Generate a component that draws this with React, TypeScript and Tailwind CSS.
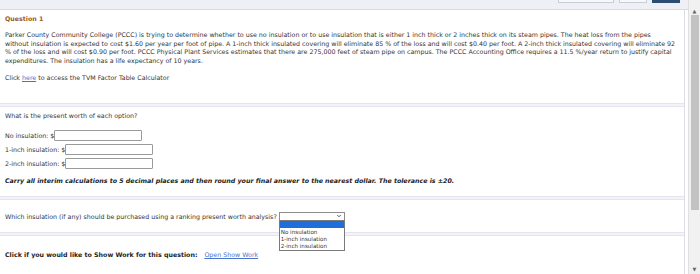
import { ChevronDown } from "lucide-react";

const font = { fontFamily: '"DejaVu Sans", Verdana, sans-serif' };

function Separator() {
  return <div className="h-[4px] border-y border-[#e4e4ee] bg-[#f3f3f8]" />;
}

function AmountRow(props: { label: string }) {
  return (
    <div className="flex items-center h-[14px]">
      <span>{props.label}</span>
      <input className="w-[88px] h-[11px] border border-[#9a9a9a] bg-white rounded-[1px]" />
    </div>
  );
}

export default function App() {
  return (
    <div
      className="w-[700px] h-[274px] overflow-hidden flex bg-white text-[#333] text-[6.3px] leading-[9px]"
      style={font}
    >
      <div className="flex-1 flex flex-col">
        <div className="h-[10px] bg-[#eef0f5] border-b border-[#d6dae2] flex justify-end items-start gap-[5px] pr-[8px]">
          <div className="w-[56px] h-[3px] border-x border-b border-[#c9ced8] bg-[#f7f8fa]" />
          <div className="w-[28px] h-[3px] border-x border-b border-[#c9ced8] bg-[#f7f8fa]" />
          <div className="w-[28px] h-[3px] bg-[#2e4d72]" />
        </div>
        <div className="flex-1 border-r border-[#dcdce6] mr-[3px] flex flex-col">
          <div className="px-[5px] pt-[4px] h-[93px]">
            <div className="font-bold text-[#a05a22]">Question 1</div>
            <div className="mt-[8px] whitespace-nowrap leading-[8.7px]">
              <div>
                Parker County Community College (PCCC) is trying to determine whether to use no insulation or to use insulation that is either 1 inch thick or 2 inches thick on its steam pipes. The heat loss from the pipes
              </div>
              <div>
                without insulation is expected to cost $1.60 per year per foot of pipe. A 1-inch thick insulated covering will eliminate 85 % of the loss and will cost $0.40 per foot. A 2-inch thick insulated covering will eliminate 92
              </div>
              <div>
                % of the loss and will cost $0.90 per foot. PCCC Physical Plant Services estimates that there are 275,000 feet of steam pipe on campus. The PCCC Accounting Office requires a 11.5 %/year return to justify capital
              </div>
              <div>expenditures. The insulation has a life expectancy of 10 years.</div>
            </div>
            <div className="mt-[7px]">
              Click <span className="text-[#4a74c9] underline">here</span> to access the TVM Factor Table Calculator
            </div>
          </div>
          <Separator />
          <div className="px-[5px] pt-[4px] h-[89px]">
            <div>What is the present worth of each option?</div>
            <div className="mt-[8px] flex flex-col">
              <AmountRow label="No insulation: $" />
              <AmountRow label="1-inch insulation: $" />
              <AmountRow label="2-inch insulation: $" />
            </div>
            <div className="mt-[6px] font-bold italic text-[#222]">
              Carry all interim calculations to 5 decimal places and then round your final answer to the nearest dollar. The tolerance is ±20.
            </div>
          </div>
          <Separator />
          <div className="px-[5px] h-[32px] flex items-center">
            <span>
              Which insulation (if any) should be purchased using a ranking present worth analysis?
            </span>
            <div className="relative ml-[2px]">
              <div className="w-[66px] h-[9px] border border-[#8d8d8d] bg-white flex items-center justify-end pr-[2px]">
                <ChevronDown size={6} strokeWidth={3} className="text-[#222]" />
              </div>
              <div className="absolute left-0 top-[8px] w-[66px] border border-[#7a7a7a] bg-white leading-[7px] text-[5.6px] z-10">
                <div className="h-[7px] bg-[#1e6fdc]" />
                <div className="pl-[1px] pt-[1px]">No insulation</div>
                <div className="pl-[1px]">1-inch insulation</div>
                <div className="pl-[1px]">2-inch insulation</div>
              </div>
            </div>
          </div>
          <Separator />
          <div className="px-[5px] pt-[14px] flex items-center">
            <span className="font-bold text-[#222]">
              Click if you would like to Show Work for this question:
            </span>
            <span className="ml-[7px] text-[#4a74c9] underline">Open Show Work</span>
          </div>
        </div>
      </div>
      <div className="w-[12px] flex flex-col items-center bg-[#f1f1f1] border-l border-[#e0e0e0] pt-[8px] pb-[2px]">
        <div className="text-[5px] leading-[6px] text-[#666]">▲</div>
        <div className="w-[8px] h-[195px] bg-[#c2c2c2] mt-[1px]" />
        <div className="flex-1" />
        <div className="text-[5px] leading-[6px] text-[#666]">▼</div>
      </div>
    </div>
  );
}
